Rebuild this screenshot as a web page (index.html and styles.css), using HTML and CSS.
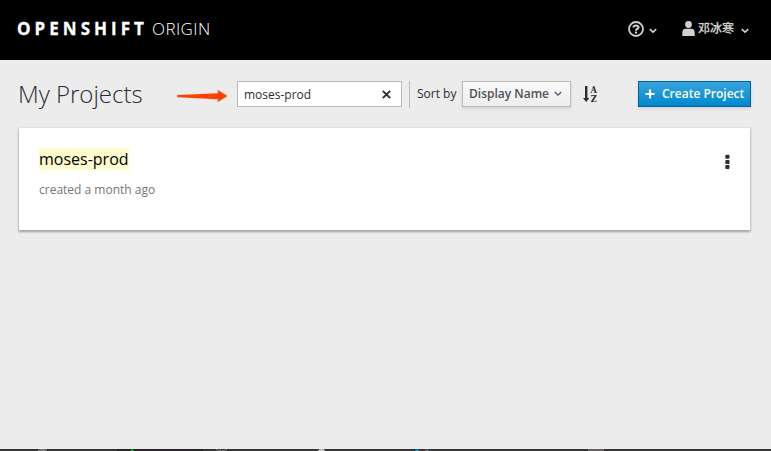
FILE: index.html
```html
<!DOCTYPE html>
<html lang="en">
<head>
<meta charset="utf-8">
<title>OpenShift Origin</title>
<link rel="stylesheet" href="styles.css">
</head>
<body>
<header class="masthead">
  <div class="brand"><strong>OPENSHIFT</strong><span>ORIGIN</span></div>
  <nav class="utilities">
    <a class="help">
      <svg width="16" height="16" viewBox="0 0 16 16"><circle cx="8" cy="8" r="7" fill="none" stroke="#d1d1d1" stroke-width="1.8"/><path d="M5.4 6.4C5.8 3.9 10.6 3.9 10.5 6.4C10.4 8.1 8 7.9 8 9.7" fill="none" stroke="#d1d1d1" stroke-width="2.1"/><path d="M6.9 10.6h2.2v2H6.9z" fill="#d1d1d1"/></svg>
      <svg class="caret" width="8" height="6" viewBox="0 0 8 6"><path d="M.8 1.2L4 4.2L7.2 1.2"/></svg>
    </a>
    <a class="user">
      <svg width="13" height="15" viewBox="0 0 13 15"><circle cx="6.5" cy="3.5" r="3.4" fill="#d1d1d1"/><path d="M.3 15V12Q.3 7.7 3.5 7.7H9.5Q12.7 7.7 12.7 12V15z" fill="#d1d1d1"/></svg>
      <span class="username">邓冰寒</span>
      <svg class="caret" width="8" height="6" viewBox="0 0 8 6"><path d="M.8 1.2L4 4.2L7.2 1.2"/></svg>
    </a>
  </nav>
</header>
<main>
  <div class="toolbar">
    <h1>My Projects</h1>
    <svg class="pointer" width="51" height="14" viewBox="0 0 51 14"><path d="M.5 6L41 4.2L40.5 .8L50.5 7L40.5 13.2L41 10.2L.5 8.2Q-.3 7.1 .5 6z" fill="#ff4000"/></svg>
    <div class="search"><span>moses-prod</span><svg width="9" height="9" viewBox="0 0 9 9"><path d="M.8 .8L8.2 8.2M8.2 .8L.8 8.2" stroke="#292e34" stroke-width="1.9"/></svg></div>
    <div class="sort">
      <span class="sort-label">Sort by</span>
      <button class="select">Display Name<svg width="8" height="6" viewBox="0 0 8 6"><path d="M.8 1L4 4.2L7.2 1" fill="none" stroke="#4d5258" stroke-width="1.2"/></svg></button>
      <svg class="order" width="16" height="18" viewBox="0 0 16 18"><path d="M2 1h2.4v12H6.4L3.2 17L0 13H2z" fill="#292e34"/><g transform="translate(7.4 0) scale(.92 1)"><text x="0" y="7.6">A</text><text x=".3" y="17">Z</text></g></svg>
    </div>
    <button class="create"><svg width="10" height="10" viewBox="0 0 10 10"><path d="M5 .5v9M.5 5h9" stroke="#fff" stroke-width="2.1"/></svg>Create Project</button>
  </div>
  <section class="card">
    <div>
      <h2><mark>moses-prod</mark></h2>
      <p>created a month ago</p>
    </div>
    <svg class="kebab" width="5" height="16" viewBox="0 0 5 16"><g fill="#292e34"><rect x=".3" y=".8" width="4.2" height="4" rx="1"/><rect x=".3" y="6" width="4.2" height="4" rx="1"/><rect x=".3" y="11.1" width="4.2" height="4" rx="1"/></g></svg>
  </section>
</main>
<footer class="dock">
  <svg width="771" height="2" viewBox="0 0 771 2"><path d="M117 0h86v2h-86z" fill="#252326"/><path d="M39 0h7v1h1v1h-9v-1h1z" fill="#767676"/><path d="M131 0h2v1h1v1h-3z" fill="#249438"/><path d="M216 0h2v1h-2zM220 0h1v2h-1zM225 0h2v1h-2zM218 1h2v1h-2zM222 1h3v1h-3z" fill="#737373"/><path d="M319 0h5v1h1v1h-7v-1h1z" fill="#bbb"/><path d="M416 0h2v1h1v1h-4v-1h1z" fill="#1686ad"/><path d="M426 0h2v1h1v1h-4v-1h1z" fill="#656565"/><path d="M588 0h16v2h-16z" fill="#625d60"/></svg>
</footer>
</body>
</html>
```
FILE: styles.css
```css
* { box-sizing: border-box; }
body {
  margin: 0;
  height: 451px;
  display: flex;
  flex-direction: column;
  overflow: hidden;
  background: #ececec;
  color: #292e34;
  font: 12px/18px "Open Sans", "Noto Sans CJK SC", sans-serif;
}
svg { display: block; flex: none; }
h1, h2, p { margin: 0; }
button { font: inherit; margin: 0; }
.masthead {
  height: 60px;
  flex: none;
  display: flex;
  justify-content: space-between;
  background: #000;
  padding: 0 22px 0 17px;
}
.brand {
  display: flex;
  height: 58px;
  align-items: center;
  color: #fff;
  font-size: 17px;
  white-space: nowrap;
}
.brand strong { font-weight: 700; letter-spacing: 4.02px; width: 135px; -webkit-text-stroke: .3px #fff; }
.brand span { font-weight: 300; letter-spacing: .4px; }
.utilities { display: flex; height: 57px; align-items: center; color: #d1d1d1; }
.help, .user { display: flex; align-items: center; }
.help { margin-right: 25px; }
.caret { margin: 5px 0 0 5px; fill: none; stroke: #d1d1d1; stroke-width: 1.6; }
.username { margin-left: 3px; width: 36px; white-space: nowrap; font-weight: 500; -webkit-text-stroke: .2px #d1d1d1; }
.user .caret { margin-left: 7px; }
main { flex: 1; padding: 0 20px 0 18px; }
.toolbar { height: 68px; display: flex; align-items: center; }
h1 { font-size: 24px; line-height: 30px; font-weight: 300; width: 159px; white-space: nowrap; }
.pointer { margin-top: 3px; }
.search {
  width: 165px;
  height: 26px;
  margin-left: 9px;
  padding: 1px 10px 0 6px;
  border: 1px solid #bbb;
  background: #fff;
  display: flex;
  align-items: center;
  justify-content: space-between;
}
.search svg { margin-top: -1px; }
.sort {
  display: flex;
  align-items: center;
  height: 27px;
  margin-left: 7px;
  border-left: 1px solid #bbb;
  padding-left: 7px;
}
.sort-label { width: 45px; white-space: nowrap; }
.select {
  width: 109px;
  height: 26px;
  display: flex;
  align-items: center;
  justify-content: space-between;
  padding: 0 8px 1px 6px;
  border: 1px solid #bbb;
  background: linear-gradient(#fafafa, #ededed);
  box-shadow: 0 2px 3px rgba(3, 3, 3, .1);
  color: #4d5258;
  font-weight: 600;
  white-space: nowrap;
}
.order { margin-left: 12px; }
.order text { font: bold 9px "DejaVu Serif", serif; fill: #292e34; }
.create {
  width: 113px;
  height: 26px;
  margin-left: auto;
  display: flex;
  align-items: center;
  gap: 7px;
  padding: 0 0 1px 6px;
  border: 1px solid #00659c;
  background: linear-gradient(#39a5dc, #0088ce);
  box-shadow: 0 2px 3px rgba(3, 3, 3, .1);
  color: #fff;
  font-weight: 600;
  white-space: nowrap;
}
.card {
  width: 731px;
  height: 102px;
  margin-left: 1px;
  display: flex;
  justify-content: space-between;
  padding: 20px 20px;
  background: #fff;
  box-shadow: 0 1px 2px 1px rgba(0, 0, 0, .14), 0 2px 2px rgba(0, 0, 0, .2);
}
h2 { font-size: 16px; line-height: 22px; font-weight: 400; color: #000; }
mark { background: #fcfcce; color: inherit; }
.card p { margin-top: 11px; color: #72767b; }
.kebab { margin-top: 6px; }
.dock { flex: none; height: 2px; background: #343435; }
```
